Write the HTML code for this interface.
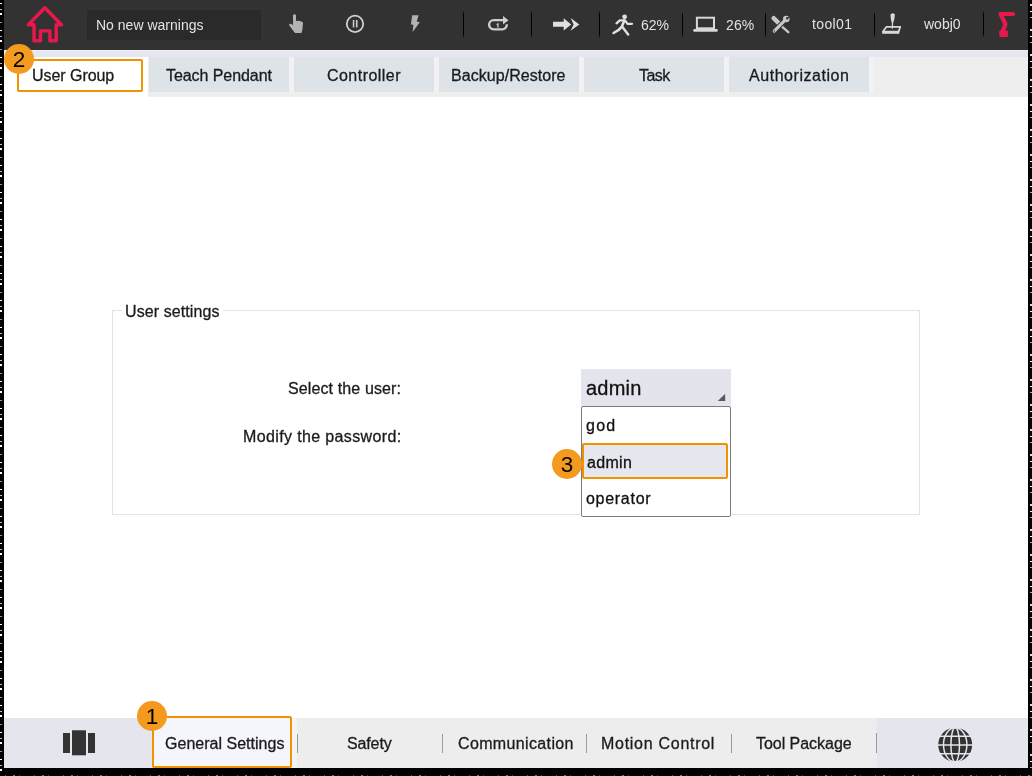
<!DOCTYPE html>
<html><head><meta charset="utf-8">
<style>
*{margin:0;padding:0;box-sizing:border-box}
html,body{width:1032px;height:776px;overflow:hidden;background:#000}
body{position:relative;font-family:"Liberation Sans",sans-serif;color:#1b1b1b}
.a{position:absolute}
.t{position:absolute;white-space:nowrap;line-height:20px;transform-origin:0 0;will-change:transform}
.d{-webkit-text-stroke:0.3px currentColor}
#top{left:4px;top:0;width:1024px;height:50px;background:#323232}
#warn{left:87px;top:10px;width:174px;height:30px;background:#2a2a2a}
.sep{position:absolute;width:1px;background:linear-gradient(#2a2a2a,#000 12%,#000 88%,#2a2a2a)}
.wt{color:#e2e2e2;font-size:14px}
#band{left:4px;top:50px;width:1024px;height:47px;background:#eeeeee}
#band2{left:4px;top:51px;width:1024px;height:6px;background:#e6e6f0}
.tab{position:absolute;top:57px;height:35px;width:140px;background:#dee3e8}
.tabt{font-size:16px}
#content{left:4px;top:97px;width:1024px;height:621px;background:#fff}
#bottom{left:4px;top:718px;width:1024px;height:50px;background:#ededed}
.lav{background:#e5e5ee}
.circ{position:absolute;width:30px;height:30px;border-radius:50%;background:#f39a1f;color:#000;font-size:22.5px;line-height:31px;text-align:center;will-change:transform}
.obox{position:absolute;border:2px solid #f39200;border-radius:2px}
</style></head><body>
<!-- outer black frame via body bg -->
<div id="top" class="a"></div>
<div id="warn" class="a"></div>

<svg class="a" style="left:0;top:0" width="1028" height="50" viewBox="0 0 1028 50">
  <!-- home -->
  <path d="M34,40.8 L34,24.8 L28.3,24.8 L44.8,7.8 L61.5,24.8 L56.2,24.8 L56.2,40.8 L49.9,40.8 L49.9,30.9 L40.5,30.9 L40.5,40.8 Z" fill="none" stroke="#e8184f" stroke-width="3.4" stroke-linejoin="round"/>
  <!-- hand -->
  <path d="M293,15 Q294.5,13.3 296,15 L296,21 Q300.5,20 303,22.5 L302.5,29 L301.5,33 L295,33 L290,26.5 Q288.3,24.5 290,23.8 Q291.6,23.5 293,25.3 Z" fill="#b2b2b2"/>
  <!-- pause -->
  <circle cx="355" cy="23.9" r="8.2" fill="none" stroke="#d0d0d0" stroke-width="1.8"/>
  <rect x="352.8" y="20" width="1.5" height="7.4" fill="#d0d0d0"/>
  <rect x="355.9" y="20" width="1.6" height="7.4" fill="#d0d0d0"/>
  <!-- bolt -->
  <path d="M412.2,15.2 L418.6,15.2 L416.7,21.6 L419.8,22.2 L412.6,32 L413.4,24.8 L410.9,24.4 Z" fill="#b2b2b2"/>
  <!-- repeat -->
  <path d="M503,20.1 H493.7 A4.6,4.6 0 0 0 493.7,29.3 H502.2 A4.6,4.6 0 0 0 506.8,24.7 V24.2" fill="none" stroke="#cfcfcf" stroke-width="2.3"/>
  <path d="M503,16 L508.5,20.2 L503,24.4 Z" fill="#cfcfcf"/>
  <path d="M496.6,24 L498.5,22.8 L498.7,27.6 L497.3,27.6 L497.3,24.7 L496.5,25 Z" fill="#cfcfcf"/>
  <!-- arrows -->
  <path d="M553,21.8 L563.7,21.8 L563.7,18.3 L571.2,24.4 L563.7,30.5 L563.7,26.8 L553,26.8 Z" fill="#e0e0e0"/>
  <path d="M570.6,18.1 L579.3,24.4 L570.6,30.8 L573.6,24.4 Z" fill="#e0e0e0"/>
  <!-- runner -->
  <circle cx="624.6" cy="16.8" r="2.4" fill="#e0e0e0"/>
  <path d="M616.5,23.3 L619.8,20.3 L625,20.3 L627.5,23.8 L632,23.8" fill="none" stroke="#e0e0e0" stroke-width="2.3" stroke-linecap="round" stroke-linejoin="round"/>
  <path d="M624.3,20.6 L621.8,26.8 L618.3,30.2 L613.6,33" fill="none" stroke="#e0e0e0" stroke-width="2.6" stroke-linecap="round" stroke-linejoin="round"/>
  <path d="M622,26.5 L628.2,34.5" fill="none" stroke="#e0e0e0" stroke-width="2.4" stroke-linecap="round"/>
  <!-- laptop -->
  <rect x="696.9" y="17.7" width="17.1" height="10.6" fill="none" stroke="#d8d8d8" stroke-width="2"/>
  <rect x="693.2" y="29" width="24.6" height="2.8" rx="1.2" fill="#d8d8d8"/>
  <!-- tools -->
  <path d="M773.6,18.2 L778.4,22.8" stroke="#c8c8c8" stroke-width="4.4" stroke-linecap="round"/>
  <path d="M782.3,26.8 L788.3,32.2" stroke="#c8c8c8" stroke-width="2.4" stroke-linecap="round"/>
  <path d="M774.2,31.2 L785.6,19.6" stroke="#323232" stroke-width="5" stroke-linecap="round"/>
  <path d="M774.2,31.2 L785.6,19.6" stroke="#c8c8c8" stroke-width="3.1" stroke-linecap="round"/>
  <circle cx="786.3" cy="19" r="3.3" fill="#c8c8c8"/>
  <path d="M786.4,18.6 L789.8,15.2 L791,17 Z" fill="#323232"/>
  <circle cx="787.2" cy="18.2" r="1.2" fill="#323232"/>
  <circle cx="774.3" cy="31" r="0.7" fill="#323232"/>
  <!-- wobj -->
  <path d="M890.5,14.6 Q892.7,11.8 894.9,14.6 L894.3,19.5 L893.1,23 L893,28.8 L891.9,28.8 L891.8,23 L890.9,19.5 Z" fill="#d8d8d8"/>
  <path d="M886.3,26.9 L900.3,26.9 L898.6,31.6 L883,31.6 Z" fill="none" stroke="#d8d8d8" stroke-width="1.7" stroke-linejoin="round"/>
  <path d="M882.2,31 L899.3,31 L899.3,33.8 L882.2,33.8 Z" fill="#d8d8d8"/>
  <!-- robot -->
  <path d="M1013,14 L1000.5,14 L1005.5,24 L1002.8,31" fill="none" stroke="#e8184f" stroke-width="4.2" stroke-linejoin="round" stroke-linecap="round"/>
  <rect x="999.3" y="30.6" width="8.6" height="6.5" rx="1" fill="#e8184f"/>
</svg>
<div class="sep" style="left:463px;top:11px;height:27px"></div>
<div class="sep" style="left:531px;top:11px;height:27px"></div>
<div class="sep" style="left:599px;top:11px;height:27px"></div>
<div class="sep" style="left:682px;top:12px;height:25px"></div>
<div class="sep" style="left:765px;top:12px;height:25px"></div>
<div class="sep" style="left:874px;top:12px;height:25px"></div>
<div class="sep" style="left:983px;top:11px;height:26px"></div>

<!-- tab strip -->
<div id="band" class="a"></div>
<div id="band2" class="a"></div>
<div class="a" style="left:289px;top:57px;width:5px;height:36px;background:#f2f2f4"></div>
<div class="a" style="left:434px;top:57px;width:5px;height:36px;background:#f2f2f4"></div>
<div class="a" style="left:579px;top:57px;width:5px;height:36px;background:#f2f2f4"></div>
<div class="a" style="left:724px;top:57px;width:5px;height:36px;background:#f2f2f4"></div>
<div class="a" style="left:869px;top:57px;width:5px;height:36px;background:#f2f2f4"></div>
<div class="tab" style="left:149px"></div>
<div class="tab" style="left:294px"></div>
<div class="tab" style="left:439px"></div>
<div class="tab" style="left:584px"></div>
<div class="tab" style="left:729px"></div>
<div class="a" style="left:4px;top:57px;width:144px;height:40px;background:#fff"></div>
<div class="obox" style="left:17px;top:59px;width:126px;height:33px"></div>
<div class="circ" style="left:4px;top:44px">2</div>

<!-- content -->
<div id="content" class="a"></div>
<div class="a" style="left:112px;top:310px;width:808px;height:205px;border:1px solid #e3e3e3"></div>
<div class="a" style="left:122px;top:300px;width:101px;height:20px;background:#fff"></div>

<div class="a" style="left:581px;top:369px;width:150px;height:37px;background:#e4e4ec"></div>
<svg class="a" style="left:717px;top:393px" width="10" height="10"><path d="M8.2,0.8 L8.2,8 L0.8,8 Z" fill="#5a5a5a"/></svg>
<div class="a" style="left:581px;top:406px;width:150px;height:111px;background:#fff;border:1px solid #7c7c7c;border-radius:2px"></div>
<div class="a" style="left:582px;top:443px;width:146px;height:36px;background:#e6e6ee;border:2px solid #f39200;border-radius:2px"></div>
<div class="circ" style="left:552px;top:449px">3</div>

<!-- bottom -->
<div id="bottom" class="a"></div>
<div class="a lav" style="left:4px;top:718px;width:150px;height:50px"></div>
<div class="a lav" style="left:877px;top:718px;width:151px;height:50px"></div>
<svg class="a" style="left:0;top:718px" width="1028" height="50" viewBox="0 718 1028 50">
  <rect x="63" y="733" width="7" height="20" fill="#333"/>
  <rect x="72" y="730.3" width="14" height="25" fill="#333"/>
  <rect x="88" y="733" width="7" height="20" fill="#333"/>
  <circle cx="955.2" cy="744.8" r="17" fill="#333"/>
  <g fill="none" stroke="#e5e5ee" stroke-width="1.5">
    <path d="M938,736.2 H973 M938,745 H973 M938,753.7 H973"/>
    <ellipse cx="955.2" cy="744.8" rx="4.3" ry="17"/>
    <ellipse cx="955.2" cy="744.8" rx="11.7" ry="17"/>
  </g>
</svg>
<div class="a" style="left:292px;top:718px;width:5px;height:50px;background:#f3f3f3"></div>
<div class="a" style="left:152px;top:716px;width:140px;height:52px;background:#f5f5fc;border:2px solid #f39200;border-radius:2px"></div>
<div class="sep" style="left:297px;top:734px;height:19px;width:1px;background:#9a9a9a"></div>
<div class="sep" style="left:442px;top:734px;height:19px;width:1px;background:#9a9a9a"></div>
<div class="sep" style="left:586px;top:734px;height:19px;width:1px;background:#9a9a9a"></div>
<div class="sep" style="left:731px;top:734px;height:19px;width:1px;background:#9a9a9a"></div>
<div class="sep" style="left:876px;top:733px;height:20px;width:1px;background:#9a9a9a"></div>
<div class="circ" style="left:137px;top:701px">1</div>
<div class="a" style="left:0;top:0;width:2px;height:776px;background:repeating-linear-gradient(180deg,#000 0,#000 3px,#fff 3px,#fff 4px,#000 4px,#000 9px,#bbb 9px,#bbb 10px,#000 10px,#000 13px,#fff 13px,#fff 15px,#000 15px,#000 22px,#999 22px,#999 23px,#000 23px,#000 27px)"></div>
<div class="a" style="left:1030px;top:0;width:2px;height:776px;background:repeating-linear-gradient(180deg,#000 0,#000 4px,#ddd 4px,#ddd 6px,#000 6px,#000 11px,#fff 11px,#fff 12px,#000 12px,#000 17px,#aaa 17px,#aaa 18px,#000 18px,#000 25px)"></div>
<div class="a" style="left:0;top:775px;width:1032px;height:1px;background:repeating-linear-gradient(90deg,#000 0,#000 5px,#555 5px,#555 6px,#000 6px,#000 13px,#777 13px,#777 15px,#000 15px,#000 19px,#444 19px,#444 20px,#000 20px,#000 29px)"></div>
<div class="t" style="left:95.84px;top:14.90px;font-size:14px;color:#e2e2e2;letter-spacing:0.010px">No new warnings</div>
<div class="t" style="left:641.14px;top:14.90px;font-size:14px;color:#e2e2e2;letter-spacing:-0.094px">62%</div>
<div class="t" style="left:726.28px;top:14.90px;font-size:14px;color:#e2e2e2;letter-spacing:0.122px">26%</div>
<div class="t" style="left:811.97px;top:14.20px;font-size:14px;color:#e2e2e2;letter-spacing:0.367px">tool01</div>
<div class="t" style="left:923.97px;top:14.40px;font-size:14px;color:#e2e2e2;letter-spacing:-0.006px">wobj0</div>
<div class="t d" style="left:32.25px;top:65.71px;font-size:16px;color:#1b1b1b;letter-spacing:-0.047px">User Group</div>
<div class="t d" style="left:165.73px;top:65.61px;font-size:16px;color:#1b1b1b;letter-spacing:-0.066px">Teach Pendant</div>
<div class="t d" style="left:326.96px;top:65.50px;font-size:16px;color:#1b1b1b;letter-spacing:0.460px">Controller</div>
<div class="t d" style="left:451.09px;top:65.50px;font-size:16px;color:#1b1b1b;letter-spacing:0.049px">Backup/Restore</div>
<div class="t d" style="left:638.73px;top:65.50px;font-size:16px;color:#1b1b1b;letter-spacing:-0.532px">Task</div>
<div class="t d" style="left:748.83px;top:65.50px;font-size:16px;color:#1b1b1b;letter-spacing:0.545px">Authorization</div>
<div class="t d" style="left:124.59px;top:301.72px;font-size:16px;color:#1b1b1b;letter-spacing:0.093px">User settings</div>
<div class="t d" style="left:288.35px;top:378.90px;font-size:16px;color:#1b1b1b;letter-spacing:0.117px">Select the user:</div>
<div class="t d" style="left:242.52px;top:426.72px;font-size:16px;color:#1b1b1b;letter-spacing:0.369px">Modify the password:</div>
<div class="t d" style="left:586.27px;top:378.00px;font-size:20px;color:#111;letter-spacing:0.224px">admin</div>
<div class="t d" style="left:585.88px;top:416.41px;font-size:16px;color:#111;letter-spacing:1.263px">god</div>
<div class="t d" style="left:586.51px;top:452.81px;font-size:16px;color:#111;letter-spacing:0.321px">admin</div>
<div class="t d" style="left:586.03px;top:488.71px;font-size:16px;color:#111;letter-spacing:0.711px">operator</div>
<div class="t d" style="left:164.85px;top:733.60px;font-size:16px;color:#1b1b1b;letter-spacing:0.016px">General Settings</div>
<div class="t d" style="left:346.73px;top:733.72px;font-size:16px;color:#1b1b1b;letter-spacing:-0.133px">Safety</div>
<div class="t d" style="left:458.34px;top:733.71px;font-size:16px;color:#1b1b1b;letter-spacing:0.359px">Communication</div>
<div class="t d" style="left:601.24px;top:733.71px;font-size:16px;color:#1b1b1b;letter-spacing:0.718px">Motion Control</div>
<div class="t d" style="left:756.08px;top:733.71px;font-size:16px;color:#1b1b1b;letter-spacing:-0.037px">Tool Package</div>
</body></html>
